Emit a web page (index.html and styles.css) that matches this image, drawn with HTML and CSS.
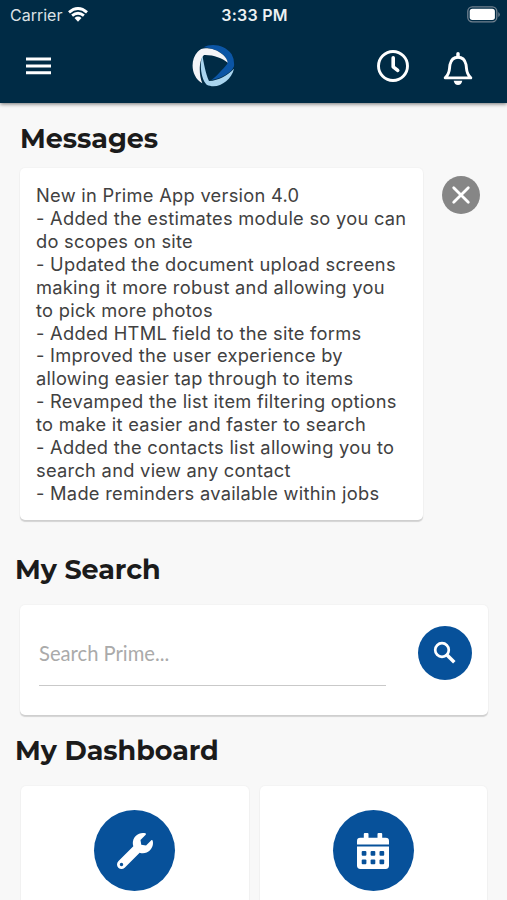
FILE: index.html
```html
<!DOCTYPE html>
<html lang="en">
<head>
<meta charset="utf-8">
<title>Prime</title>
<link rel="stylesheet" href="styles.css">
</head>
<body>
<header class="header">
  <div class="status">
    <div class="carrier"><span>Carrier</span>
      <svg width="20" height="15" viewBox="0 0 20 15" fill="none" stroke="#fff" stroke-width="2.9"><path d="M1 5.3Q10-2.3 19 5.3M4.1 8.7Q10 3.9 15.9 8.7"/><path d="M6.5 11Q10 8.2 13.5 11L10 14.8Z" fill="#fff" stroke="none"/></svg>
    </div>
    <span class="time">3:33 PM</span>
    <svg class="battery" width="33" height="17" viewBox="0 0 33 17"><rect x=".8" y=".8" width="29" height="15" rx="4.5" fill="none" stroke="#70818f" stroke-width="1.3"/><rect x="2.7" y="2.7" width="25.2" height="11.2" rx="2.7" fill="#fff"/><path d="M31.3 6v5q1.5-1 1.5-2.5T31.3 6Z" fill="#70818f"/></svg>
  </div>
  <nav class="toolbar">
    <svg class="menu" width="25" height="18" viewBox="0 0 25 18"><path d="M0 2h25M0 9h25M0 15.7h25" stroke="#fff" stroke-width="3"/></svg>
    <svg class="logo" width="43" height="44" viewBox="576 131 129 132"><path fill="#0b55a5" d="M611 141C634 128 675 133 695 162Q704 178 702 198C696 217 662 236 634 239C650 227 668 207 682 190C685 164 645 143 611 141Z"/><path fill="#f4f4f7" d="M607 249C573 229 569 180 593 154Q604 142 622 144C648 145 682 166 683 187C666 173 640 163 612 164C596 180 596 223 607 249Z"/><path fill="#a9d5ef" d="M607 166C612 188 616 218 627 242C657 240 682 226 702 205C693 243 652 268 620 253C603 237 598 193 607 166Z"/></svg>
    <svg class="clock" width="34" height="34" viewBox="0 0 34 34" fill="none" stroke="#fff"><circle cx="17" cy="17" r="14.5" stroke-width="2.9"/><path d="M17.2 8.8v9l4.5 3.6" stroke-width="3.6" stroke-linecap="round" stroke-linejoin="round"/></svg>
    <svg class="bell" width="30" height="34" viewBox="0 0 30 34"><path d="M2.2 25.9C7.5 21 6 17.5 7 12.5Q8.6 5.3 15 5.3T23 12.5C24 17.5 22.5 21 27.8 25.9Z" fill="none" stroke="#fff" stroke-width="2.9" stroke-linejoin="round"/><path d="M15 1.8v3" stroke="#fff" stroke-width="3.5" stroke-linecap="round"/><path d="M10.7 28.8h8.6q-.8 4.2-4.3 4.2t-4.3-4.2Z" fill="#fff"/></svg>
  </nav>
</header>
<main>
  <h2 class="title messages-title">Messages</h2>
  <div class="message-row">
    <div class="card message">
      <p>New in Prime App version 4.0</p>
      <p>- Added the estimates module so you can</p>
      <p>do scopes on site</p>
      <p>- Updated the document upload screens</p>
      <p>making it more robust and allowing you</p>
      <p>to pick more photos</p>
      <p>- Added HTML field to the site forms</p>
      <p>- Improved the user experience by</p>
      <p>allowing easier tap through to items</p>
      <p>- Revamped the list item filtering options</p>
      <p>to make it easier and faster to search</p>
      <p>- Added the contacts list allowing you to</p>
      <p>search and view any contact</p>
      <p>- Made reminders available within jobs</p>
    </div>
    <svg class="close" width="38" height="38" viewBox="0 0 38 38"><circle cx="19" cy="19" r="19" fill="#868686"/><path d="M11.7 11.7 26.3 26.3M26.3 11.7 11.7 26.3" stroke="#fff" stroke-width="2.8" stroke-linecap="round"/></svg>
  </div>
  <h2 class="title search-title">My Search</h2>
  <div class="card search">
    <div class="field">Search Prime...</div>
    <div class="search-button"><svg width="24" height="24" viewBox="0 0 24 24" fill="none" stroke="#fff"><circle cx="9" cy="9" r="6.8" stroke-width="2.7"/><path d="m14 14 7.3 7.3" stroke-width="3.5"/></svg></div>
  </div>
  <h2 class="title dashboard-title">My Dashboard</h2>
  <div class="dashboard">
    <div class="card tile"><div class="disc"><svg width="36" height="36" viewBox="0 0 512 512" fill="#fff"><path d="M507.73 109.1c-2.24-9.03-13.54-12.09-20.12-5.51l-74.36 74.36-67.88-11.31-11.31-67.88 74.36-74.36c6.62-6.62 3.43-17.9-5.66-20.16-47.38-11.74-99.55.91-136.58 37.93-39.64 39.64-50.55 97.1-34.05 147.2L18.74 402.76c-24.99 24.99-24.99 65.51 0 90.5 24.99 24.99 65.51 24.99 90.5 0l213.21-213.21c50.12 16.71 107.47 5.68 147.37-34.22 37.07-37.07 49.7-89.32 37.91-136.73zM64 472c-13.25 0-24-10.75-24-24 0-13.26 10.75-24 24-24s24 10.74 24 24c0 13.25-10.75 24-24 24z"/></svg></div></div>
    <div class="card tile"><div class="disc"><svg width="32" height="36" viewBox="0 0 32 36"><path fill="#fff" d="M0 11.5V8q0-3.3 3.3-3.3h3.5V1q0-1 1-1h2.7q1 0 1 1v3.7h9V1q0-1 1-1h2.7q1 0 1 1v3.7h3.5Q32 4.7 32 8v3.5ZM0 13.6h32v19q0 3.4-3.4 3.4H3.4Q0 36 0 32.6Z"/><g fill="#07519a"><rect x="4.7" y="18" width="4.7" height="4.7" rx="1"/><rect x="13.6" y="18" width="4.7" height="4.7" rx="1"/><rect x="22.5" y="18" width="4.7" height="4.7" rx="1"/><rect x="4.7" y="26.6" width="4.7" height="4.7" rx="1"/><rect x="13.6" y="26.6" width="4.7" height="4.7" rx="1"/><rect x="22.5" y="26.6" width="4.7" height="4.7" rx="1"/></g></svg></div></div>
  </div>
</main>
</body>
</html>
```
FILE: styles.css
```css
* { box-sizing: border-box; }
body { margin: 0; width: 507px; height: 900px; overflow: hidden; background: #f8f8f8; font-family: Inter, "Liberation Sans", sans-serif; }
svg { display: block; flex: none; }
.header { height: 103px; background: #002b45; box-shadow: 0 1px 4px rgba(0,0,0,.55); color: #fff; }
.status { height: 30px; padding: 0 8px 0 10px; display: grid; grid-template-columns: 1fr auto 1fr; align-items: center; font-size: 16px; }
.carrier { display: flex; align-items: center; gap: 6px; color: #dce2e6; letter-spacing: 0; }
.carrier svg { margin-top: -2px; }
.time { font-weight: 600; letter-spacing: .25px; color: #edf1f3; }
.battery { justify-self: end; margin-right: -1px; margin-top: -2px; }
.toolbar { height: 73px; display: flex; align-items: center; padding: 0 34px 0 26px; }
.menu { margin-top: -1px; }
.logo { margin-left: 141px; margin-top: -1px; }
.clock { margin-left: 141px; margin-top: -2px; }
.bell { margin-left: 33px; margin-top: 4px; }
.title { margin: 0; color: #1b1b1b; font-family: Montserrat, Inter, sans-serif; font-weight: 700; font-size: 27px; line-height: 34px; letter-spacing: -.05px; white-space: nowrap; }
.messages-title { padding: 19px 0 0 20px; }
.message-row { display: flex; margin: 12px 0 0 20px; gap: 19px; }
.card { background: #fff; border-radius: 5px; box-shadow: 0 2px 1px rgba(0,0,0,.15), 0 0 2px rgba(0,0,0,.07); }
.message { width: 403px; height: 352px; padding: 16px 16px 0; color: #414141; font-size: 18.3px; letter-spacing: .27px; line-height: 22.92px; white-space: nowrap; }
.message p { margin: 0; }
.close { margin-top: 8px; }
.search-title { padding: 33px 0 0 15px; }
.search { margin: 18px 19px 0 20px; height: 110px; padding: 20px 16px 0 19px; display: flex; justify-content: space-between; align-items: flex-start; }
.field { width: 347px; height: 61px; border-bottom: 1px solid #c9c9c9; color: #aaa; font: 20.2px/57px Lato, sans-serif; }
.search-button { width: 54px; height: 54px; border-radius: 50%; background: #07519a; display: grid; place-items: center; margin-top: 1px; }
.dashboard-title { padding: 19px 0 0 15px; }
.dashboard { margin: 18px 20px 0 21px; display: grid; grid-template-columns: 1fr 1fr; gap: 11px; }
.tile { height: 150px; padding-top: 24px; display: flex; justify-content: center; }
.disc { width: 81px; height: 81px; border-radius: 50%; background: #07519a; display: grid; place-items: center; }
```
